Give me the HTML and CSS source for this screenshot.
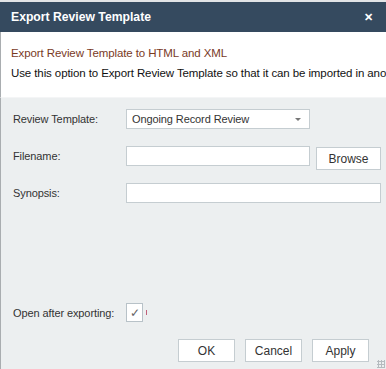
FILE: index.html
```html
<!DOCTYPE html>
<html lang="en">

<head>
    <meta charset="UTF-8">
    <meta name="viewport" content="width=device-width, initial-scale=1.0">
    <title>Export Review Template</title>
    <link rel="stylesheet" href="styles.css">
</head>

<body>
    <div class="dialog">
        <div class="titlebar">
            <span class="title">Export Review Template</span>
            <span class="close">&#x2715;</span>
        </div>

        <div class="intro">
            <p class="heading">Export Review Template to HTML and XML</p>
            <p class="note">Use this option to Export Review Template so that it can be imported in another system.</p>
        </div>

        <div class="form">
            <div class="row">
                <label class="label">Review Template:</label>
                <div class="select">
                    <span>Ongoing Record Review</span>
                    <span class="arrow"></span>
                </div>
            </div>
            <div class="row">
                <label class="label">Filename:</label>
                <div class="file">
                    <input type="text" class="input short">
                    <button class="button browse">Browse</button>
                </div>
            </div>
            <div class="row">
                <label class="label">Synopsis:</label>
                <input type="text" class="input wide">
            </div>

            <div class="row check-row">
                <label class="label">Open after exporting:</label>
                <div class="check-wrap">
                    <span class="checkbox">&#x2713;</span>
                    <span class="tick-mark"></span>
                </div>
            </div>

            <div class="footer">
                <button class="button">OK</button>
                <button class="button">Cancel</button>
                <button class="button">Apply</button>
            </div>
            <div class="grip"></div>
        </div>
    </div>
</body>

</html>
```

FILE: styles.css
```css
body {
    margin: 0;
    padding: 0;
    font-family: "Liberation Sans", Arial, sans-serif;
    font-size: 11px;
    letter-spacing: -0.1px;
    color: #333;
    background-color: #e2e4e6;
}

.dialog {
    width: 386px;
    height: 369px;
    display: flex;
    flex-direction: column;
    box-sizing: border-box;
    padding-top: 2px;
    overflow: hidden;
}

.titlebar {
    height: 30px;
    background-color: #354a5f;
    color: white;
    display: flex;
    align-items: center;
    justify-content: space-between;
    padding: 0 13px 0 11px;
}

.title {
    font-weight: bold;
    font-size: 12.2px;
    letter-spacing: 0;
}

.close {
    font-size: 11px;
    font-weight: bold;
}

.intro {
    background-color: white;
    border-left: 1px solid #a9adb0;
    padding: 11px 0 14px 10px;
    white-space: nowrap;
    overflow: hidden;
}

.intro p {
    margin: 0;
    line-height: 20px;
    font-size: 11.5px;
}

.heading {
    color: #7a3a1f;
}

.note {
    color: #111;
}

.form {
    flex: 1;
    position: relative;
    background-color: #eceff0;
    border-left: 1px solid #a9adb0;
    border-top: 1px solid #f4f5f6;
    padding: 11px 5px 0 12px;
    display: flex;
    flex-direction: column;
    gap: 17px;
}

.row {
    display: grid;
    grid-template-columns: 113px 1fr;
    align-items: center;
}

.label {
    color: #333;
    white-space: nowrap;
}

.select {
    width: 184px;
    height: 20px;
    box-sizing: border-box;
    background: white;
    border: 1px solid #c5cdd1;
    display: flex;
    align-items: center;
    justify-content: space-between;
    padding: 0 8px 0 5px;
}

.arrow {
    width: 0;
    height: 0;
    border-left: 3px solid transparent;
    border-right: 3px solid transparent;
    border-top: 3px solid #777;
}

.file {
    display: flex;
    gap: 6px;
    align-items: flex-start;
    height: 20px;
}

.input {
    height: 20px;
    box-sizing: border-box;
    border: 1px solid #c5cdd1;
    background: white;
    margin: 0;
    padding: 0;
}

.short {
    width: 184px;
}

.wide {
    width: 255px;
}

.button {
    height: 23px;
    width: 57px;
    box-sizing: border-box;
    background: white;
    border: 1px solid #c5cdd1;
    font-family: "Liberation Sans", Arial, sans-serif;
    font-size: 12px;
    color: #333;
    padding: 0;
    flex-shrink: 0;
}

.browse {
    width: 65px;
    margin-top: 1px;
}

.check-row {
    margin-top: 83px;
}

.check-wrap {
    display: flex;
    align-items: center;
    gap: 3px;
}

.checkbox {
    width: 17px;
    height: 19px;
    box-sizing: border-box;
    border: 1px solid #b8c2c8;
    background: white;
    color: #666;
    font-size: 12px;
    display: flex;
    align-items: center;
    justify-content: center;
}

.tick-mark {
    width: 1px;
    height: 5px;
    background-color: #c0607a;
}

.footer {
    display: flex;
    justify-content: flex-end;
    gap: 10px;
    padding-right: 12px;
}

.grip {
    position: absolute;
    right: 1px;
    bottom: 1px;
    width: 8px;
    height: 8px;
    background-image: radial-gradient(circle, #b5bbbf 1px, transparent 1.2px);
    background-size: 3px 3px;
}
```
